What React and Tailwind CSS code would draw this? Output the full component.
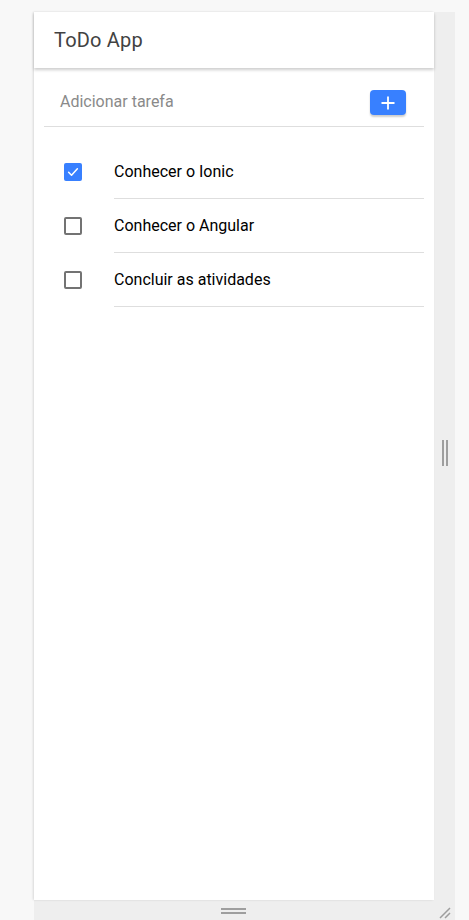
import React, { useState } from 'react';

const initialTasks = [
  { id: 1, text: 'Conhecer o Ionic', done: true },
  { id: 2, text: 'Conhecer o Angular', done: false },
  { id: 3, text: 'Concluir as atividades', done: false },
];

const Checkbox = ({ checked, onChange }) => (
  <button
    onClick={onChange}
    className={`w-[18px] h-[18px] rounded-[2px] flex items-center justify-center ${checked ? 'bg-[#3880ff]' : 'border-2 border-[#737373] bg-white'}`}
  >
    {checked && (
      <svg width="14" height="14" viewBox="0 0 24 24" fill="none">
        <path d="M4.5 12.5l5 5L19.5 6.5" stroke="white" strokeWidth="2.6" strokeLinecap="round" strokeLinejoin="round" />
      </svg>
    )}
  </button>
);

const App = () => {
  const [tasks, setTasks] = useState(initialTasks);

  const toggle = (id) => {
    setTasks(prev => prev.map(t => t.id === id ? { ...t, done: !t.done } : t));
  };

  return (
    <div className="h-[920px] w-[469px] bg-[#f8f8f8] pl-[34px] pt-[12px] overflow-hidden font-['Roboto',sans-serif]">
      <div className="w-[421px] h-[908px] bg-[#eeeeee] flex flex-col">
        <div className="flex h-[889px]">
          <div className="w-[400px] h-full bg-white flex flex-col shadow-[-1px_0_2px_rgba(0,0,0,0.12)]">
            <header className="h-[56px] flex items-center px-[20px] shadow-[0_2px_3px_rgba(0,0,0,0.2)] relative z-10">
              <h1 className="text-[20px] text-[#424242] tracking-[0.2px]">ToDo App</h1>
            </header>

            <div className="mx-[10px] h-[59px] flex items-start justify-between border-b border-[#dedede] pl-[16px] pr-[18px]">
              <span className="text-[16px] text-[#8a8a8a] mt-[22px]">Adicionar tarefa</span>
              <button className="mt-[22px] w-[36px] h-[25px] rounded-[4px] bg-[#3880ff] flex items-center justify-center shadow-[0_2px_2px_rgba(0,0,0,0.2)]">
                <svg width="16" height="16" viewBox="0 0 16 16" fill="none">
                  <path d="M8 1.5v13M1.5 8h13" stroke="white" strokeWidth="1.8" />
                </svg>
              </button>
            </div>

            <ul className="pt-[18px]">
              {tasks.map(t => (
                <li key={t.id} className="flex items-center h-[54px]">
                  <div className="w-[80px] pl-[30px] flex items-center">
                    <Checkbox checked={t.done} onChange={() => toggle(t.id)} />
                  </div>
                  <div className="flex-1 mr-[10px] h-full flex items-center border-b border-[#dedede] text-[16px] text-black">
                    {t.text}
                  </div>
                </li>
              ))}
            </ul>
          </div>

          <div className="flex-1 flex items-center justify-center">
            <div className="flex gap-[2px] -mt-[6px]">
              <div className="w-[2px] h-[26px] bg-[#9e9e9e]" />
              <div className="w-[2px] h-[26px] bg-[#9e9e9e]" />
            </div>
          </div>
        </div>

        <div className="flex-1 flex items-center">
          <div className="w-[400px] flex justify-center">
            <div className="flex flex-col gap-[2px] w-[25px] -ml-[2px] mt-[2px]">
              <div className="h-[2px] bg-[#9e9e9e]" />
              <div className="h-[2px] bg-[#9e9e9e]" />
            </div>
          </div>
          <div className="flex-1 flex justify-center mt-[6px]">
            <svg width="14" height="14" viewBox="0 0 14 14">
              <path d="M2 12L12 2M7 12L12 7" stroke="#9e9e9e" strokeWidth="1.5" />
            </svg>
          </div>
        </div>
      </div>
    </div>
  );
};

export default App;
